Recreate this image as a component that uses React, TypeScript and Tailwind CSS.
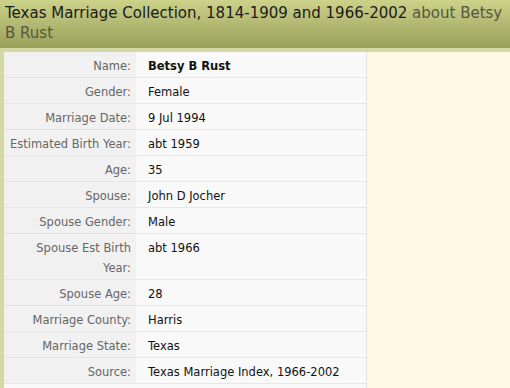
const rows: { label: string; value: string; bold?: boolean }[] = [
  { label: "Name:", value: "Betsy B Rust", bold: true },
  { label: "Gender:", value: "Female" },
  { label: "Marriage Date:", value: "9 Jul 1994" },
  { label: "Estimated Birth Year:", value: "abt 1959" },
  { label: "Age:", value: "35" },
  { label: "Spouse:", value: "John D Jocher" },
  { label: "Spouse Gender:", value: "Male" },
  { label: "Spouse Est Birth Year:", value: "abt 1966" },
  { label: "Spouse Age:", value: "28" },
  { label: "Marriage County:", value: "Harris" },
  { label: "Marriage State:", value: "Texas" },
  { label: "Source:", value: "Texas Marriage Index, 1966-2002" },
];

export default function App() {
  return (
    <div
      className="h-[388px] w-[510px] overflow-hidden bg-[#d3d8a5]"
      style={{ fontFamily: "Tahoma, 'DejaVu Sans', Verdana, sans-serif" }}
    >
      <div className="h-[48px] bg-gradient-to-b from-[#cdd28a] to-[#98a05a] px-[5px] pt-[3px] text-[15px] leading-[20px] text-[#1a1a1a]">
        Texas Marriage Collection, 1814-1909 and 1966-2002{" "}
        <span className="text-[#55573f]">about Betsy B Rust</span>
      </div>
      <div className="ml-[4px] mt-[4px] flex h-[340px] bg-[#fff8e2]">
        <div className="w-[363px] border-r border-[#e2e2e2] bg-[#f9f9f9] text-[11.5px]">
          {rows.map((r) => (
            <div key={r.label} className="flex border-b border-[#e6e6e6]">
              <div className="w-[132px] shrink-0 bg-[#f1f1f1] pb-[1px] pl-[4px] pr-[5px] pt-[4px] text-right leading-[20px] text-[#666]">
                {r.label}
              </div>
              <div
                className={`pb-[1px] pl-[12px] pt-[4px] leading-[20px] text-[#111] ${r.bold ? "font-bold" : ""}`}
              >
                {r.value}
              </div>
            </div>
          ))}
        </div>
        <div className="flex-1" />
      </div>
    </div>
  );
}
